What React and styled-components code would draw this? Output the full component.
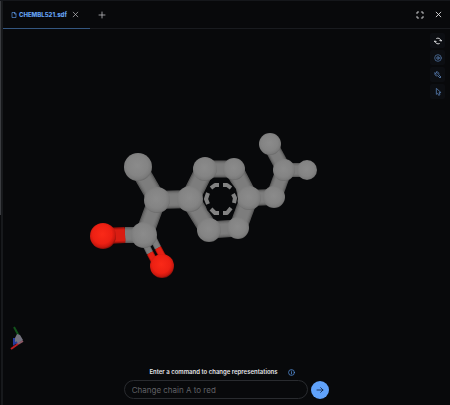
import React from "react";
import styled, { createGlobalStyle } from "styled-components";

const GlobalStyle = createGlobalStyle`
  *, *::before, *::after { box-sizing: border-box; }
  body { margin: 0; background: #08090b; color: #e4e4e7; font-family: Inter, "Open Sans", sans-serif; }
  button, input { font: inherit; color: inherit; }
`;

const Shell = styled.div`
  display: flex;
  min-height: 100vh;
  border-top: 1px solid #15171b;
`;

const Sash = styled.div`
  width: 3px;
  flex: none;
  display: flex;
  flex-direction: column;
  border-right: 2px solid #17191c;
  background: #08090b;
`;

const SashFill = styled.div`
  width: 1px;
  height: 53%;
  background: #3a3c40;
`;

const Viewer = styled.main`
  flex: 1;
  min-width: 0;
  display: flex;
  flex-direction: column;
`;

const Header = styled.header`
  display: flex;
  height: 28px;
  flex: none;
  border-bottom: 1px solid #191b1f;
`;

const Tab = styled.div`
  display: flex;
  align-items: center;
  gap: 3px;
  height: 28px;
  padding: 0 8px;
  border-bottom: 1px solid #34567f;
`;

const TabLabel = styled.button`
  display: flex;
  align-items: center;
  gap: 2px;
  padding: 0;
  border: 0;
  background: none;
  color: #64a2f2;
  font-size: 6px;
  line-height: 10px;
  font-weight: 800;
  white-space: nowrap;
`;

const IconButton = styled.button`
  display: grid;
  place-items: center;
  width: 12px;
  height: 12px;
  padding: 0;
  border: 0;
  background: none;
  color: ${(p) => p.$tone || "#b4b5b8"};
`;

const AddTab = styled(IconButton)`
  align-self: center;
  margin-left: 6px;
`;

const WindowActions = styled.div`
  display: flex;
  align-items: center;
  gap: 6px;
  margin-left: auto;
  padding-right: 6px;
`;

const Stage = styled.section`
  position: relative;
  flex: 1;
  min-height: 0;
  display: flex;
  flex-direction: column;
  justify-content: flex-end;
`;

const Canvas = styled.svg`
  position: absolute;
  inset: 0;
  width: 100%;
  height: 100%;
`;

const Toolbar = styled.nav`
  position: absolute;
  top: 4px;
  right: 5px;
  display: flex;
  flex-direction: column;
  gap: 2px;
`;

const Tool = styled(IconButton)`
  width: 15px;
  height: 15px;
  border-radius: 2px;
  background: #0c0e12;
`;

const CommandForm = styled.form`
  position: relative;
  display: flex;
  flex-direction: column;
  align-items: center;
  gap: 2px;
  padding: 0 0 6px;
`;

const Prompt = styled.div`
  display: flex;
  align-items: center;
  gap: 8px;
  padding-right: 6px;
`;

const PromptLabel = styled.label`
  font-size: 6px;
  line-height: 12px;
  font-weight: 600;
  white-space: nowrap;
`;

const CommandRow = styled.div`
  display: flex;
  align-items: center;
  gap: 3px;
  width: 46%;
`;

const CommandInput = styled.input`
  flex: 1;
  min-width: 0;
  height: 19px;
  padding: 0 7px;
  border: 1px solid #292b2f;
  border-radius: 10px;
  background: #08090b;
  font-size: 8px;
  outline: none;
  &::placeholder { color: #606166; opacity: 1; }
`;

const Submit = styled.button`
  display: grid;
  place-items: center;
  width: 18px;
  height: 18px;
  flex: none;
  padding: 0;
  border: 0;
  border-radius: 50%;
  background: #60a2fa;
  color: #10233e;
`;

const Glyph = styled.svg.attrs({ viewBox: "0 0 24 24", fill: "none", stroke: "currentColor", "aria-hidden": true })`
  width: ${(p) => p.$size || 8}px;
  height: ${(p) => p.$size || 8}px;
  stroke-width: ${(p) => p.$weight || 2.5};
  stroke-linecap: round;
  stroke-linejoin: round;
`;

const CloseIcon = (p) => <Glyph {...p}><path d="M4 4l16 16M20 4L4 20" /></Glyph>;

const atoms = {
  methyl: [138, 167, 14], alpha: [157, 200, 13], acid: [144, 235, 13],
  hydroxyl: [103, 236, 13], oxo: [162, 266, 12],
  ipso: [190, 199, 13], tl: [205, 169, 12], tr: [234, 169, 11],
  para: [249, 198, 12], br: [238, 228, 11], bl: [209, 230, 12],
  methylene: [274, 197, 11], branch: [284, 170, 11],
  top: [270, 144, 11], right: [307, 170, 10],
};

const bonds = [
  ["methyl", "alpha", 18], ["alpha", "ipso", 18], ["alpha", "acid", 18],
  ["ipso", "tl", 19], ["tl", "tr", 17], ["tr", "para", 18],
  ["para", "br", 18], ["br", "bl", 17], ["bl", "ipso", 19],
  ["para", "methylene", 16], ["methylene", "branch", 16],
  ["branch", "top", 15], ["branch", "right", 14],
];

const dashes = [
  "M211 188L215 185H219", "M223 185H227L231 188", "M233 194L235 198L234 203",
  "M231 208L227 213H223", "M219 213H215L211 209", "M208 193L206 199L208 204",
];

/* A cylinder is a few strokes of shrinking width, from rim shade to lit core. */
function Bond({ from, to, width, shades = ["#5c5c5c", "#6e6e6e", "#787878", "#7d7d7d"] }) {
  return shades.map((c, i) => (
    <line key={c} x1={from[0]} y1={from[1]} x2={to[0]} y2={to[1]}
      stroke={c} strokeWidth={width * (1 - i * 0.14)} />
  ));
}

function Molecule() {
  return (
    <Canvas viewBox="3 29 447 376" role="img" aria-label="Ball and stick model of CHEMBL521">
      <defs>
        <radialGradient id="carbon" cx="48%" cy="45%" r="56%">
          <stop offset="0" stopColor="#8b8b8b" /><stop offset=".65" stopColor="#848484" />
          <stop offset=".88" stopColor="#7a7a7a" /><stop offset="1" stopColor="#666666" />
        </radialGradient>
        <radialGradient id="oxygen" cx="47%" cy="43%" r="57%">
          <stop offset="0" stopColor="#fa2918" /><stop offset=".65" stopColor="#ed2013" />
          <stop offset=".88" stopColor="#c8170e" /><stop offset="1" stopColor="#80100a" />
        </radialGradient>
      </defs>
      {bonds.map(([a, b, w]) => <Bond key={a + b} from={atoms[a]} to={atoms[b]} width={w} />)}
      <Bond from={[144, 235]} to={[125, 235]} width={16} />
      <Bond from={[125, 235]} to={[103, 236]} width={16} shades={["#9b120b", "#c3190f", "#d91d12"]} />
      {[[-4, 2], [4, -3]].map(([dx, dy]) => (
        <g key={dx}>
          <Bond from={[146 + dx, 235 + dy]} to={[154 + dx, 251 + dy]} width={7} />
          <Bond from={[154 + dx, 251 + dy]} to={[162 + dx, 266 + dy]} width={7} shades={["#9b120b", "#c3190f", "#e52014"]} />
        </g>
      ))}
      {Object.entries(atoms).map(([k, [x, y, r]]) => (
        <circle key={k} cx={x} cy={y} r={r} fill={k === "hydroxyl" || k === "oxo" ? "url(#oxygen)" : "url(#carbon)"} />
      ))}
      <path d="M213 180H229L236 189L238 199L234 211L229 218H214L207 210L204 199L207 187Z" fill="#08090b" />
      {dashes.map((d) => <path key={d} d={d} fill="none" stroke="#828282" strokeWidth="4" strokeLinejoin="round" />)}
      <path d="M14 327L20 338" stroke="#12521b" strokeWidth="2" />
      <path d="M15 338L17 334L20 335L23 340L18 344L14 343Z" fill="#73727f" />
      <path d="M14 338V344L17 342" fill="none" stroke="#263a9c" strokeWidth="2" />
      <path d="M11 349L18 344" stroke="#b81d25" strokeWidth="2" />
      <path d="M18 344L23 341" stroke="#8e5a66" strokeWidth="2" />
    </Canvas>
  );
}

export default function App() {
  return (
    <>
      <GlobalStyle />
      <Shell>
        <Sash><SashFill /></Sash>
        <Viewer>
          <Header>
            <Tab>
              <TabLabel type="button">
                <Glyph $size={6}><path d="M14 2H4v20h16V8zM14 2v6h6" /></Glyph>
                CHEMBL521.sdf
              </TabLabel>
              <IconButton type="button" aria-label="Close tab"><CloseIcon $size={7} /></IconButton>
            </Tab>
            <AddTab type="button" aria-label="New tab"><Glyph><path d="M12 3v18M3 12h18" /></Glyph></AddTab>
            <WindowActions>
              <IconButton type="button" aria-label="Full screen" $tone="#e1e1e3">
                <Glyph><path d="M8 3H3v5M16 3h5v5M21 16v5h-5M8 21H3v-5" /></Glyph>
              </IconButton>
              <IconButton type="button" aria-label="Close viewer" $tone="#e1e1e3"><CloseIcon $size={7} $weight={3} /></IconButton>
            </WindowActions>
          </Header>
          <Stage>
            <Molecule />
            <Toolbar aria-label="Viewer tools">
              <Tool type="button" aria-label="Reset view" $tone="#d4d5d7">
                <Glyph $weight={3}><path d="M8 4a9 9 0 0 1 13 8l2-2M21 12l-4-2M16 20a9 9 0 0 1-13-8l-2 2M3 12l4 2" /></Glyph>
              </Tool>
              <Tool type="button" aria-label="Focus" $tone="#4b6b97">
                <Glyph><circle cx="12" cy="12" r="10" /><circle cx="12" cy="12" r="4" /><circle cx="12" cy="12" r="1" /></Glyph>
              </Tool>
              <Tool type="button" aria-label="Settings" $tone="#4b6b97">
                <Glyph $weight={3}><path d="M3 6l4 4 3-3-4-4a6 6 0 0 1 8 8l7 7-3 3-7-7a6 6 0 0 1-8-8z" /></Glyph>
              </Tool>
              <Tool type="button" aria-label="Select" $tone="#4b6b97">
                <Glyph $weight={3}><path d="M7 2v17l4-3 3 6 4-2-3-6h5z" /></Glyph>
              </Tool>
            </Toolbar>
            <CommandForm onSubmit={(e) => e.preventDefault()}>
              <Prompt>
                <PromptLabel htmlFor="command">Enter a command to change representations</PromptLabel>
                <IconButton type="button" aria-label="Command help" $tone="#5793df">
                  <Glyph $size={7}><circle cx="12" cy="12" r="10" /><path d="M12 11v6M12 7v1" /></Glyph>
                </IconButton>
              </Prompt>
              <CommandRow>
                <CommandInput id="command" placeholder="Change chain A to red" />
                <Submit type="submit" aria-label="Run command">
                  <Glyph><path d="M3 12h18M14 5l7 7-7 7" /></Glyph>
                </Submit>
              </CommandRow>
            </CommandForm>
          </Stage>
        </Viewer>
      </Shell>
    </>
  );
}
